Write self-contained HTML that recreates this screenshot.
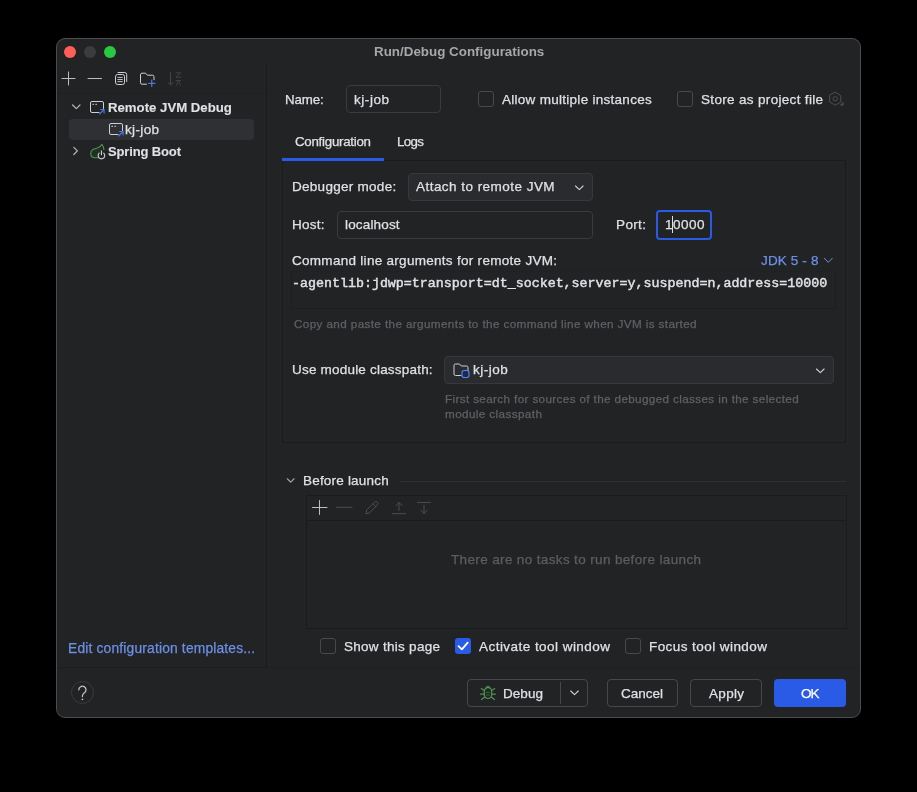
<!DOCTYPE html>
<html><head><meta charset="utf-8"><style>
html,body{margin:0;padding:0;background:#000;width:917px;height:792px;overflow:hidden}
body{position:relative;font-family:"Liberation Sans",sans-serif}
#win{position:absolute;left:56px;top:38px;width:805px;height:680px;box-sizing:border-box;border:1px solid #4c4c4e;border-radius:9px;background:#222325}
.t{position:absolute;white-space:nowrap;will-change:transform}
.b{position:absolute}
.mono{position:absolute;white-space:nowrap;font-family:"Liberation Mono",monospace;font-size:13.32px;line-height:13.32px;color:#dfe1e5;font-weight:400;-webkit-text-stroke:0.45px #dfe1e5;will-change:transform}
svg{position:absolute;overflow:visible}
</style></head><body>
<div id="win"></div>
<div class="b" style="left:64px;top:45.8px;width:12px;height:12.0px;border-radius:50%;background:#ff5f57"></div>
<div class="b" style="left:84px;top:45.8px;width:12px;height:12.0px;border-radius:50%;background:#3c3c3e"></div>
<div class="b" style="left:104px;top:45.8px;width:12px;height:12.0px;border-radius:50%;background:#28c840"></div>
<div class="t" style="left:373.50px;top:45.15px;font-size:13.4px;line-height:13.4px;color:#a6a7aa;font-weight:700;letter-spacing:-0.003px;">Run/Debug Configurations</div>
<div class="b" style="left:266px;top:63px;width:1px;height:605px;background:#1a1b1d"></div>
<div class="b" style="left:57px;top:93px;width:209px;height:1px;background:#1f2022"></div>
<div class="b" style="left:57px;top:667px;width:210px;height:1px;background:#1d1e20"></div>
<div class="b" style="left:267px;top:667px;width:593px;height:1px;background:#1f2022"></div>
<div class="b" style="left:68.5px;top:118.5px;width:185.5px;height:21.0px;background:#2f3034;border-radius:4px"></div>
<div class="t" style="left:108.40px;top:100.62px;font-size:13.2px;line-height:13.2px;color:#dfe1e5;font-weight:700;letter-spacing:0.003px;-webkit-text-stroke:0.1px #dfe1e5;">Remote JVM Debug</div>
<div class="t" style="left:124.80px;top:122.67px;font-size:13.5px;line-height:13.5px;color:#dfe1e5;font-weight:400;letter-spacing:0.348px;-webkit-text-stroke:0.25px #dfe1e5;">kj-job</div>
<div class="t" style="left:108.40px;top:144.79px;font-size:13px;line-height:13px;color:#dfe1e5;font-weight:700;letter-spacing:-0.138px;-webkit-text-stroke:0.1px #dfe1e5;">Spring Boot</div>
<div class="t" style="left:284.70px;top:92.74px;font-size:13.3px;line-height:13.3px;color:#dfe1e5;font-weight:400;letter-spacing:-0.093px;-webkit-text-stroke:0.25px #dfe1e5;">Name:</div>
<div class="b" style="left:345.5px;top:85px;width:95.5px;height:27.5px;border:1px solid #393b3f;border-radius:4px;box-sizing:border-box"></div>
<div class="t" style="left:354.00px;top:92.57px;font-size:13.5px;line-height:13.5px;color:#dfe1e5;font-weight:400;letter-spacing:0.548px;-webkit-text-stroke:0.25px #dfe1e5;">kj-job</div>
<div class="b" style="left:478px;top:91px;width:16px;height:16px;border:1px solid #48494d;border-radius:3px;box-sizing:border-box"></div>
<div class="t" style="left:502.30px;top:92.57px;font-size:13.5px;line-height:13.5px;color:#dfe1e5;font-weight:400;letter-spacing:0.278px;-webkit-text-stroke:0.25px #dfe1e5;">Allow multiple instances</div>
<div class="b" style="left:677px;top:91px;width:16px;height:16px;border:1px solid #48494d;border-radius:3px;box-sizing:border-box"></div>
<div class="t" style="left:701.20px;top:92.57px;font-size:13.5px;line-height:13.5px;color:#dfe1e5;font-weight:400;letter-spacing:0.327px;-webkit-text-stroke:0.25px #dfe1e5;">Store as project file</div>
<div class="t" style="left:295.00px;top:134.74px;font-size:13.3px;line-height:13.3px;color:#dfe1e5;font-weight:400;letter-spacing:-0.260px;-webkit-text-stroke:0.25px #dfe1e5;">Configuration</div>
<div class="t" style="left:397.00px;top:134.74px;font-size:13.3px;line-height:13.3px;color:#dfe1e5;font-weight:400;letter-spacing:-0.614px;-webkit-text-stroke:0.25px #dfe1e5;">Logs</div>
<div class="b" style="left:281.5px;top:157.8px;width:102.5px;height:3.0px;background:#2a5be7"></div>
<div class="b" style="left:384px;top:160px;width:462px;height:1px;background:#1a1b1d"></div>
<div class="b" style="left:282px;top:161px;width:564px;height:282px;border:1px solid #1a1b1d;border-top:none;box-sizing:border-box"></div>
<div class="t" style="left:291.80px;top:179.77px;font-size:13.5px;line-height:13.5px;color:#dfe1e5;font-weight:400;letter-spacing:0.279px;-webkit-text-stroke:0.25px #dfe1e5;">Debugger mode:</div>
<div class="b" style="left:407.5px;top:173px;width:185.0px;height:27.80000000000001px;background:#2a2b2f;border:1px solid #36383c;border-radius:4px;box-sizing:border-box"></div>
<div class="t" style="left:416.00px;top:180.37px;font-size:13.5px;line-height:13.5px;color:#dfe1e5;font-weight:400;letter-spacing:0.463px;-webkit-text-stroke:0.25px #dfe1e5;">Attach to remote JVM</div>
<div class="t" style="left:291.50px;top:217.57px;font-size:13.5px;line-height:13.5px;color:#dfe1e5;font-weight:400;letter-spacing:0.248px;-webkit-text-stroke:0.25px #dfe1e5;">Host:</div>
<div class="b" style="left:336.5px;top:211px;width:256.0px;height:27.5px;border:1px solid #393b3f;border-radius:4px;box-sizing:border-box"></div>
<div class="t" style="left:345.40px;top:217.57px;font-size:13.5px;line-height:13.5px;color:#dfe1e5;font-weight:400;letter-spacing:0.165px;-webkit-text-stroke:0.25px #dfe1e5;">localhost</div>
<div class="t" style="left:616.00px;top:217.87px;font-size:13.5px;line-height:13.5px;color:#dfe1e5;font-weight:400;letter-spacing:0.372px;-webkit-text-stroke:0.25px #dfe1e5;">Port:</div>
<div class="b" style="left:656px;top:210px;width:56px;height:29.5px;border:2px solid #2a5be7;border-radius:4px;box-sizing:border-box"></div>
<div class="t" style="left:664.80px;top:217.87px;font-size:13.5px;line-height:13.5px;color:#dfe1e5;font-weight:400;letter-spacing:0.000px;-webkit-text-stroke:0.25px #dfe1e5;">1</div>
<div class="t" style="left:673.30px;top:217.87px;font-size:13.5px;line-height:13.5px;color:#dfe1e5;font-weight:400;letter-spacing:0.522px;-webkit-text-stroke:0.25px #dfe1e5;">0000</div>
<div class="b" style="left:672px;top:216px;width:1px;height:17px;background:#dfe1e5"></div>
<div class="t" style="left:292.00px;top:253.57px;font-size:13.5px;line-height:13.5px;color:#dfe1e5;font-weight:400;letter-spacing:0.288px;-webkit-text-stroke:0.25px #dfe1e5;">Command line arguments for remote JVM:</div>
<div class="t" style="left:761.40px;top:253.57px;font-size:13.5px;line-height:13.5px;color:#6d8fe6;font-weight:400;letter-spacing:0.141px;-webkit-text-stroke:0.25px #6d8fe6;">JDK 5 - 8</div>
<div class="b" style="left:291px;top:271px;width:545px;height:38px;border:1px solid #1d1e20;border-top-color:#202123;border-radius:2px;box-sizing:border-box"></div>
<div class="mono" style="left:291.9px;top:276.80px">-agentlib:jdwp=transport=dt_socket,server=y,suspend=n,address=10000</div>
<div class="t" style="left:294.00px;top:318.39px;font-size:11.7px;line-height:11.7px;color:#5f6165;font-weight:400;letter-spacing:0.385px;-webkit-text-stroke:0.25px #5f6165;">Copy and paste the arguments to the command line when JVM is started</div>
<div class="t" style="left:291.80px;top:362.87px;font-size:13.5px;line-height:13.5px;color:#dfe1e5;font-weight:400;letter-spacing:0.201px;-webkit-text-stroke:0.25px #dfe1e5;">Use module classpath:</div>
<div class="b" style="left:443.5px;top:356px;width:390.5px;height:28px;background:#2a2b2f;border:1px solid #36383c;border-radius:4px;box-sizing:border-box"></div>
<div class="t" style="left:473.00px;top:362.87px;font-size:13.5px;line-height:13.5px;color:#dfe1e5;font-weight:400;letter-spacing:0.488px;-webkit-text-stroke:0.25px #dfe1e5;">kj-job</div>
<div class="t" style="left:445.40px;top:393.09px;font-size:11.7px;line-height:11.7px;color:#5f6165;font-weight:400;letter-spacing:0.365px;-webkit-text-stroke:0.25px #5f6165;">First search for sources of the debugged classes in the selected</div>
<div class="t" style="left:445.40px;top:407.89px;font-size:11.7px;line-height:11.7px;color:#5f6165;font-weight:400;letter-spacing:0.396px;-webkit-text-stroke:0.25px #5f6165;">module classpath</div>
<div class="t" style="left:302.60px;top:473.57px;font-size:13.5px;line-height:13.5px;color:#dfe1e5;font-weight:400;letter-spacing:0.199px;-webkit-text-stroke:0.25px #dfe1e5;">Before launch</div>
<div class="b" style="left:400px;top:481px;width:446px;height:1px;background:#2e2f32"></div>
<div class="b" style="left:306px;top:495px;width:541px;height:134px;border:1px solid #1a1b1d;box-sizing:border-box"></div>
<div class="b" style="left:307px;top:520px;width:539px;height:1px;background:#1a1b1d"></div>
<div class="t" style="left:450.70px;top:552.87px;font-size:13.5px;line-height:13.5px;color:#5c5e62;font-weight:400;letter-spacing:0.358px;-webkit-text-stroke:0.25px #5c5e62;">There are no tasks to run before launch</div>
<div class="b" style="left:320px;top:638px;width:16px;height:16px;border:1px solid #48494d;border-radius:3px;box-sizing:border-box"></div>
<div class="t" style="left:344.30px;top:639.57px;font-size:13.5px;line-height:13.5px;color:#dfe1e5;font-weight:400;letter-spacing:0.284px;-webkit-text-stroke:0.25px #dfe1e5;">Show this page</div>
<div class="b" style="left:455.3px;top:638px;width:16.0px;height:16px;background:#2a5be7;border-radius:3px"></div>
<div class="t" style="left:479.30px;top:639.57px;font-size:13.5px;line-height:13.5px;color:#dfe1e5;font-weight:400;letter-spacing:0.457px;-webkit-text-stroke:0.25px #dfe1e5;">Activate tool window</div>
<div class="b" style="left:624.7px;top:638px;width:16.0px;height:16px;border:1px solid #48494d;border-radius:3px;box-sizing:border-box"></div>
<div class="t" style="left:649.20px;top:639.57px;font-size:13.5px;line-height:13.5px;color:#dfe1e5;font-weight:400;letter-spacing:0.434px;-webkit-text-stroke:0.25px #dfe1e5;">Focus tool window</div>
<div class="t" style="left:67.50px;top:641.92px;font-size:13.8px;line-height:13.8px;color:#6d8fe6;font-weight:400;letter-spacing:0.180px;-webkit-text-stroke:0.25px #6d8fe6;">Edit configuration templates...</div>
<div class="b" style="left:71px;top:681px;width:23px;height:23px;border:1px solid #393b3f;border-radius:50%;box-sizing:border-box"></div>
<div class="b" style="left:466.5px;top:679px;width:121.5px;height:28px;border:1px solid #46484c;border-radius:4px;box-sizing:border-box"></div>
<div class="b" style="left:560px;top:682px;width:1px;height:22px;background:#46484c"></div>
<div class="t" style="left:502.50px;top:686.97px;font-size:13.5px;line-height:13.5px;color:#dfe1e5;font-weight:400;letter-spacing:0.054px;-webkit-text-stroke:0.25px #dfe1e5;">Debug</div>
<div class="b" style="left:606.5px;top:679px;width:71.5px;height:28px;border:1px solid #46484c;border-radius:4px;box-sizing:border-box"></div>
<div class="t" style="left:621.00px;top:686.97px;font-size:13.5px;line-height:13.5px;color:#dfe1e5;font-weight:400;letter-spacing:-0.005px;-webkit-text-stroke:0.25px #dfe1e5;">Cancel</div>
<div class="b" style="left:690px;top:679px;width:72px;height:28px;border:1px solid #46484c;border-radius:4px;box-sizing:border-box"></div>
<div class="t" style="left:709.00px;top:686.97px;font-size:13.5px;line-height:13.5px;color:#dfe1e5;font-weight:400;letter-spacing:0.307px;-webkit-text-stroke:0.25px #dfe1e5;">Apply</div>
<div class="b" style="left:773.5px;top:679px;width:72.5px;height:28px;background:#2a5be7;border-radius:4px"></div>
<div class="t" style="left:800.70px;top:686.97px;font-size:13.5px;line-height:13.5px;color:#ffffff;font-weight:400;letter-spacing:-1.005px;-webkit-text-stroke:0.25px #ffffff;">OK</div>
<svg width="917" height="792" style="position:absolute;left:0;top:0"><path d="M62 78.5H75 M68.5 72V85" stroke="#c4c6cb" stroke-width="0.95" fill="none" stroke-linecap="round" stroke-linejoin="round" /><path d="M88 78.5H101.5" stroke="#c4c6cb" stroke-width="0.95" fill="none" stroke-linecap="round" stroke-linejoin="round" /><path d="M115.5 76.5a2 2 0 0 1 2-2h5a2 2 0 0 1 2 2v6a2 2 0 0 1-2 2h-5a2 2 0 0 1-2-2z" stroke="#ced0d6" stroke-width="1" fill="none" stroke-linecap="round" stroke-linejoin="round" /><path d="M118 72.5h6.7a2 2 0 0 1 2 2v7" stroke="#ced0d6" stroke-width="1" fill="none" stroke-linecap="round" stroke-linejoin="round" /><path d="M117.8 77.4h4.5 M117.8 79.5h4.5 M117.8 81.6h4.5" stroke="#ced0d6" stroke-width="0.9" fill="none" stroke-linecap="round" stroke-linejoin="round" /><path d="M146.5 84.2h-4.5a1.5 1.5 0 0 1-1.5-1.5v-8a1.5 1.5 0 0 1 1.5-1.5h3.6l1.8 2h5.1a1.5 1.5 0 0 1 1.5 1.5v3" stroke="#ced0d6" stroke-width="1" fill="none" stroke-linecap="round" stroke-linejoin="round" /><path d="M151.8 80V86.6 M148.5 83.3H155.1" stroke="#548af7" stroke-width="1" fill="none" stroke-linecap="round" stroke-linejoin="round" /><path d="M170.5 72.5V85 M167.9 82.4l2.6 2.6 2.6-2.6" stroke="#44464a" stroke-width="1" fill="none" stroke-linecap="round" stroke-linejoin="round" /><path d="M176 72.8h4.5l-4.5 4.4h4.5 M176 80.5h4.5 M176.5 85.3l2-4.8 2 4.8" stroke="#44464a" stroke-width="0.9" fill="none" stroke-linecap="round" stroke-linejoin="round" /><path d="M72.6 105l3.7 3.7 3.7-3.7" stroke="#b4b7bc" stroke-width="1.2" fill="none" stroke-linecap="round" stroke-linejoin="round" /><path d="M73.8 147.3l3.6 3.6-3.6 3.6" stroke="#b4b7bc" stroke-width="1.2" fill="none" stroke-linecap="round" stroke-linejoin="round" /><path d="M99 112.5h-7a1.5 1.5 0 0 1-1.5-1.5v-8a1.5 1.5 0 0 1 1.5-1.5h10a1.5 1.5 0 0 1 1.5 1.5v5.5" stroke="#ced0d6" stroke-width="1" fill="none" stroke-linecap="round" stroke-linejoin="round" /><path d="M92.8 104.2h0.8 M95.8 104.2h0.8" stroke="#ced0d6" stroke-width="1.1" fill="none" stroke-linecap="round" stroke-linejoin="round" /><path d="M99.6 114l4.5-4.5 M100.6 109.5h3.5v3.5" stroke="#4677e6" stroke-width="1.1" fill="none" stroke-linecap="round" stroke-linejoin="round" /><path d="M118 134.5h-7a1.5 1.5 0 0 1-1.5-1.5v-8a1.5 1.5 0 0 1 1.5-1.5h10a1.5 1.5 0 0 1 1.5 1.5v5.5" stroke="#ced0d6" stroke-width="1" fill="none" stroke-linecap="round" stroke-linejoin="round" /><path d="M111.8 126.2h0.8 M114.8 126.2h0.8" stroke="#ced0d6" stroke-width="1.1" fill="none" stroke-linecap="round" stroke-linejoin="round" /><path d="M118.6 136l4.5-4.5 M119.6 131.5h3.5v3.5" stroke="#4677e6" stroke-width="1.1" fill="none" stroke-linecap="round" stroke-linejoin="round" /><path d="M101.7 144.4c-1 2-2.5 3.2-5 3.8c-3.5 0.6-6 2.2-6 5.2c0 2.6 2 4.3 4.6 4.3h3.2" stroke="#55905a" stroke-width="1.1" fill="#1f3322" stroke-linecap="round" stroke-linejoin="round" /><path d="M101.7 144.4c1.4 1.6 2.2 3.5 2.2 5.4" stroke="#55905a" stroke-width="1.1" fill="none" stroke-linecap="round" stroke-linejoin="round" /><path d="M99.2 153.2a3.3 3.3 0 1 0 4.5 0 M101.45 150.8v4" stroke="#ced0d6" stroke-width="1.1" fill="none" stroke-linecap="round" stroke-linejoin="round" /><path d="M835.2 92.3l5.6 3.2v6.5l-5.6 3.2-5.6-3.2v-6.5z" stroke="#4c4e52" stroke-width="1" fill="none" stroke-linecap="round" stroke-linejoin="round" /><circle cx="835.2" cy="98.8" r="2.2" stroke="#4c4e52" fill="none"/><path d="M840.3 105.3h3v-3z" stroke="#4c4e52" stroke-width="0.6" fill="#4c4e52" stroke-linecap="round" stroke-linejoin="round" /><path d="M575.5 186l3.8 3.6 3.8-3.6" stroke="#ced0d6" stroke-width="1.1" fill="none" stroke-linecap="round" stroke-linejoin="round" /><path d="M816.5 369l3.8 3.6 3.8-3.6" stroke="#ced0d6" stroke-width="1.1" fill="none" stroke-linecap="round" stroke-linejoin="round" /><path d="M824.3 258.3l4 4 4-4" stroke="#6d8fe6" stroke-width="1" fill="none" stroke-linecap="round" stroke-linejoin="round" /><path d="M570.7 691l3.8 3.6 3.8-3.6" stroke="#ced0d6" stroke-width="1.1" fill="none" stroke-linecap="round" stroke-linejoin="round" /><path d="M287.3 478.8l3.4 3.3 3.4-3.3" stroke="#a0a3a8" stroke-width="1.2" fill="none" stroke-linecap="round" stroke-linejoin="round" /><path d="M461 375.5h-5.5a1.5 1.5 0 0 1-1.5-1.5v-8.5a1.5 1.5 0 0 1 1.5-1.5h4l1.8 2h5.2a1.5 1.5 0 0 1 1.5 1.5v3" stroke="#ced0d6" stroke-width="1" fill="none" stroke-linecap="round" stroke-linejoin="round" /><rect x="462" y="370.5" width="7" height="7" rx="2.2" stroke="#548af7" fill="#1c2a4a" stroke-width="1.1"/><path d="M312.5 507.5H327 M319.5 500.5V514.5" stroke="#c4c6cb" stroke-width="0.95" fill="none" stroke-linecap="round" stroke-linejoin="round" /><path d="M336.5 507.3H352" stroke="#4c4e52" stroke-width="1" fill="none" stroke-linecap="round" stroke-linejoin="round" /><path d="M366 513.5l0.8-3.6 7.8-7.8a1.8 1.8 0 0 1 2.6 0l0.2 0.2a1.8 1.8 0 0 1 0 2.6l-7.8 7.8z M373 503.8l2.8 2.8" stroke="#4c4e52" stroke-width="1" fill="none" stroke-linecap="round" stroke-linejoin="round" /><path d="M392.5 513.7H405.5 M399 510.5V502.5 M395.8 505.7l3.2-3.2 3.2 3.2" stroke="#4c4e52" stroke-width="1" fill="none" stroke-linecap="round" stroke-linejoin="round" /><path d="M417.3 502.4H430.5 M424 505.5V513.5 M420.8 510.3l3.2 3.2 3.2-3.2" stroke="#4c4e52" stroke-width="1" fill="none" stroke-linecap="round" stroke-linejoin="round" /><path d="M78.8 689.8a3.6 3.6 0 1 1 5.6 3c-1.3 0.9-2 1.6-2 3.2v0.6" stroke="#bfc1c6" stroke-width="1.3" fill="none" stroke-linecap="round" stroke-linejoin="round" /><circle cx="82.4" cy="699.3" r="0.9" fill="#bfc1c6"/><path d="M458.5 646.2l3.4 3.2 5.8-6.8" stroke="#ffffff" stroke-width="1.8" fill="none" stroke-linecap="round" stroke-linejoin="round" /><path d="M484.3 691.2a3.7 3.7 0 0 1 7.4 0v3.6a3.7 3.7 0 0 1-7.4 0z" stroke="#55905a" stroke-width="1.2" fill="#1c2e1f" stroke-linecap="round" stroke-linejoin="round" /><path d="M486 688.6a2 2 0 0 1 4 0" stroke="#55905a" stroke-width="1.2" fill="none" stroke-linecap="round" stroke-linejoin="round" /><path d="M484.3 690.6l-3-2 M491.7 690.6l3-2 M484.3 694.2h-3.6 M491.7 694.2h3.6 M484.5 697.3l-3 2.2 M491.5 697.3l3 2.2" stroke="#55905a" stroke-width="1.2" fill="none" stroke-linecap="round" stroke-linejoin="round" /><path d="M486.5 692.5h3 M486.5 695h3" stroke="#3f6a43" stroke-width="0.8" fill="none" stroke-linecap="round" stroke-linejoin="round" /></svg>
</body></html>
